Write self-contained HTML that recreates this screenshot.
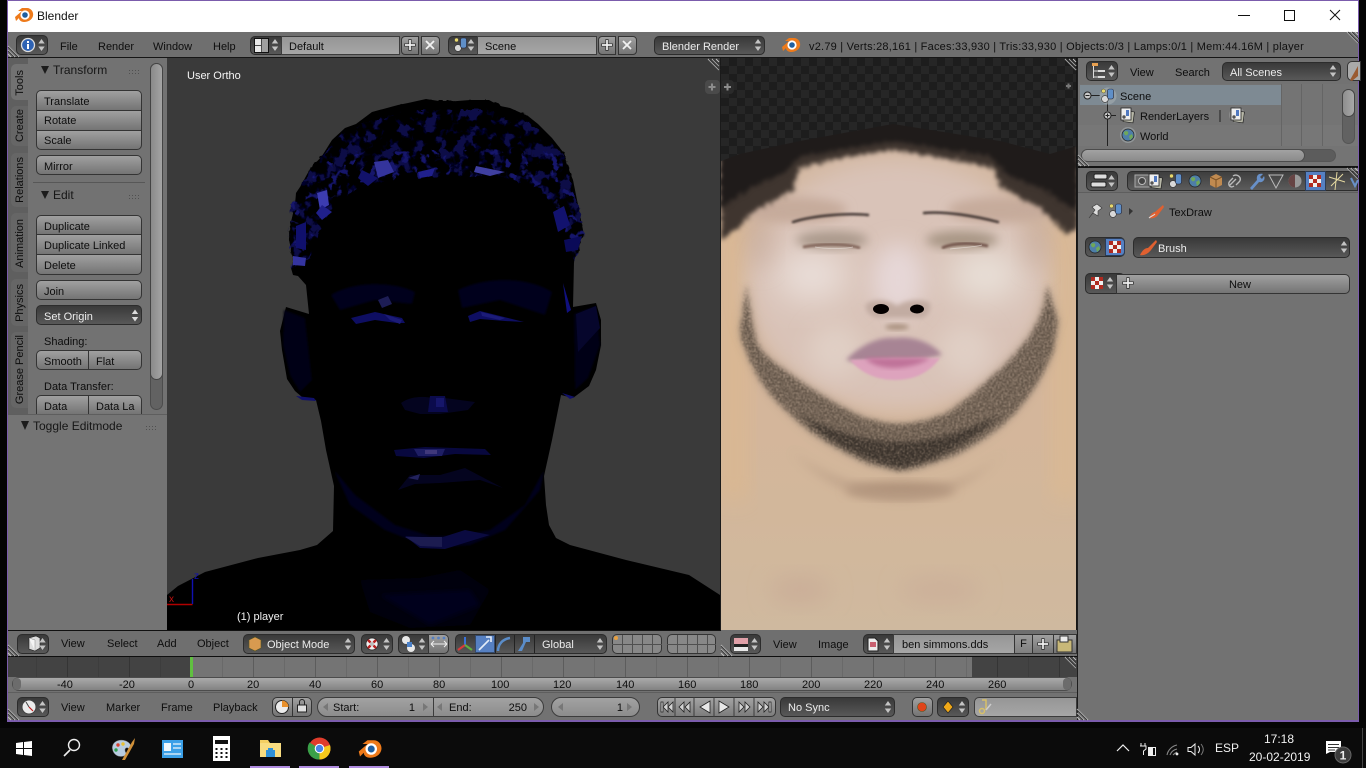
<!DOCTYPE html>
<html><head><meta charset="utf-8"><title>Blender</title>
<style>
html,body{margin:0;padding:0;width:1366px;height:768px;overflow:hidden;background:#040404}
*{box-sizing:border-box}
body{font:11px/14px "Liberation Sans",sans-serif;color:#0d0d0d;position:relative}
.a{position:absolute}
.t{position:absolute;white-space:nowrap;line-height:14px;margin-top:1px}
.p{position:absolute;background:#727272}
.d{position:absolute;background:linear-gradient(#393939,#585858);border:1px solid #2c2c2c;border-radius:5px;color:#ececec;white-space:nowrap}
.l{position:absolute;background:linear-gradient(#a0a0a0,#747474);border:1px solid #343434;border-radius:5px;white-space:nowrap;padding-left:7px}
.f{position:absolute;background:linear-gradient(#969696,#a6a6a6);border:1px solid #3c3c3c;white-space:nowrap}
.tab{position:absolute;left:11px;width:17px;background:#666;border-radius:5px 0 0 5px}
.tab span{position:absolute;left:2px;bottom:4px;writing-mode:vertical-rl;transform:rotate(180deg);line-height:14px;white-space:nowrap}
</style></head><body>
<!-- window frame -->
<div class="a" style="left:7px;top:0;width:1352px;height:722px;background:#7b5cac"></div>
<div class="a" style="left:8px;top:1px;width:1350px;height:31px;background:#fff"></div>
<div class="t" style="left:37px;top:8px;font-size:12px;color:#111">Blender</div>
<div class="a" style="left:8px;top:32px;width:1350px;height:688px;background:#161616"></div>

<!-- top header -->
<div class="p" style="left:8px;top:32px;width:1350px;height:25px;background:#6f6f6f"></div>
<div class="d" style="left:16px;top:35px;width:32px;height:20px"></div>
<div class="t" style="left:60px;top:39px">File</div>
<div class="t" style="left:98px;top:39px">Render</div>
<div class="t" style="left:153px;top:39px">Window</div>
<div class="t" style="left:213px;top:39px">Help</div>
<div class="d" style="left:250px;top:36px;width:34px;height:19px;border-radius:5px 0 0 5px"></div>
<div class="f" style="left:281px;top:36px;width:119px;height:19px;padding-left:7px;line-height:20px">Default</div>
<div class="l" style="left:401px;top:36px;width:18px;height:19px;border-radius:4px 0 0 4px"></div>
<div class="l" style="left:421px;top:36px;width:19px;height:19px;border-radius:0 4px 4px 0"></div>
<div class="d" style="left:448px;top:36px;width:32px;height:19px;border-radius:5px 0 0 5px"></div>
<div class="f" style="left:477px;top:36px;width:120px;height:19px;padding-left:7px;line-height:20px">Scene</div>
<div class="l" style="left:598px;top:36px;width:18px;height:19px;border-radius:4px 0 0 4px"></div>
<div class="l" style="left:618px;top:36px;width:19px;height:19px;border-radius:0 4px 4px 0"></div>
<div class="d" style="left:654px;top:36px;width:111px;height:19px;padding-left:7px;line-height:20px">Blender Render</div>
<div class="t" style="left:809px;top:39px;color:#101010;letter-spacing:.22px">v2.79 | Verts:28,161 | Faces:33,930 | Tris:33,930 | Objects:0/3 | Lamps:0/1 | Mem:44.16M | player</div>

<!-- tool shelf -->
<div class="p" style="left:8px;top:58px;width:159px;height:572px"></div>
<div class="a" style="left:8px;top:58px;width:20px;height:357px;background:#5f5f5f"></div>
<div class="tab" style="top:64px;height:36px;background:#727272"><span>Tools</span></div>
<div class="tab" style="top:106px;height:40px"><span>Create</span></div>
<div class="tab" style="top:153px;height:54px"><span>Relations</span></div>
<div class="tab" style="top:213px;height:59px"><span>Animation</span></div>
<div class="tab" style="top:279px;height:47px"><span>Physics</span></div>
<div class="tab" style="top:332px;height:76px"><span>Grease Pencil</span></div>
<div class="a" style="left:150px;top:63px;width:13px;height:347px;border-radius:7px;background:#626262;border:1px solid #4c4c4c"></div>
<div class="a" style="left:150px;top:63px;width:13px;height:317px;border-radius:7px;background:linear-gradient(90deg,#8a8a8a,#a4a4a4);border:1px solid #444"></div>
<div class="t" style="left:53px;top:62px;font-size:12px;color:#161616">Transform</div>
<div class="l" style="left:36px;top:90px;width:106px;height:21px;border-radius:5px 5px 0 0;line-height:22px">Translate</div>
<div class="l" style="left:36px;top:110px;width:106px;height:21px;border-radius:0;line-height:20px">Rotate</div>
<div class="l" style="left:36px;top:130px;width:106px;height:20px;border-radius:0 0 5px 5px;line-height:20px">Scale</div>
<div class="l" style="left:36px;top:155px;width:106px;height:20px;line-height:22px">Mirror</div>
<div class="a" style="left:33px;top:182px;width:112px;height:1px;background:#575757"></div>
<div class="t" style="left:53px;top:187px;font-size:12px;color:#161616">Edit</div>
<div class="l" style="left:36px;top:215px;width:106px;height:20px;border-radius:5px 5px 0 0;line-height:22px">Duplicate</div>
<div class="l" style="left:36px;top:234px;width:106px;height:21px;border-radius:0;line-height:22px">Duplicate Linked</div>
<div class="l" style="left:36px;top:254px;width:106px;height:21px;border-radius:0 0 5px 5px;line-height:22px">Delete</div>
<div class="l" style="left:36px;top:280px;width:106px;height:20px;line-height:22px">Join</div>
<div class="d" style="left:36px;top:305px;width:106px;height:20px;padding-left:7px;line-height:22px">Set Origin</div>
<div class="t" style="left:44px;top:334px">Shading:</div>
<div class="l" style="left:36px;top:350px;width:53px;height:20px;border-radius:5px 0 0 5px;line-height:22px">Smooth</div>
<div class="l" style="left:88px;top:350px;width:54px;height:20px;border-radius:0 5px 5px 0;line-height:22px">Flat</div>
<div class="t" style="left:44px;top:379px">Data Transfer:</div>
<div class="l" style="left:36px;top:395px;width:53px;height:19px;border-radius:5px 0 0 0;line-height:22px;border-bottom:0;overflow:hidden">Data</div>
<div class="l" style="left:88px;top:395px;width:54px;height:19px;border-radius:0 5px 0 0;line-height:22px;border-bottom:0;overflow:hidden">Data La</div>
<div class="a" style="left:8px;top:414px;width:159px;height:216px;background:#747474;border-top:1px solid #5e5e5e"></div>
<div class="t" style="left:33px;top:418px;font-size:12px;color:#161616">Toggle Editmode</div>

<!-- 3D viewport -->
<div class="a" style="left:167px;top:58px;width:553px;height:572px;background:#3a3a3a"></div>
<svg class="a" style="left:0;top:0" width="1366" height="768" viewBox="0 0 1366 768">
<defs>
<clipPath id="vp"><rect x="167" y="58" width="553" height="572"/></clipPath>
<clipPath id="tx"><rect x="721" y="58" width="355" height="572"/></clipPath>
<clipPath id="hb"><path d="M291 270 287 235 291 205 310 170 345 130 400 112 430 110 490 110 528 122 563 155 578 205 586 240 574 262 568 240 560 212 540 188 500 176 450 176 400 178 360 186 333 205 320 232 310 258Z"/></clipPath>
<filter id="b1" x="-30%" y="-30%" width="160%" height="160%"><feGaussianBlur stdDeviation="1"/></filter>
<filter id="b2" x="-30%" y="-30%" width="160%" height="160%"><feGaussianBlur stdDeviation="2.5"/></filter>
<filter id="b5" x="-30%" y="-30%" width="160%" height="160%"><feGaussianBlur stdDeviation="5"/></filter>
<filter id="b10" x="-40%" y="-40%" width="180%" height="180%"><feGaussianBlur stdDeviation="11"/></filter>
<filter id="b20" x="-60%" y="-60%" width="220%" height="220%"><feGaussianBlur stdDeviation="18"/></filter>
<filter id="jag" x="-5%" y="-5%" width="110%" height="110%"><feTurbulence type="fractalNoise" baseFrequency=".18" numOctaves="2" seed="4" result="n"/><feDisplacementMap in="SourceGraphic" in2="n" scale="6" xChannelSelector="R" yChannelSelector="G"/></filter>
<filter id="mot" x="0" y="0" width="100%" height="100%" color-interpolation-filters="sRGB"><feTurbulence type="fractalNoise" baseFrequency=".075" numOctaves="3" seed="9"/><feColorMatrix values="0 0 0 0 .035 0 0 0 0 .035 0 0 0 0 .28 8 0 0 0 -4.05"/></filter>
<filter id="mot2" x="0" y="0" width="100%" height="100%" color-interpolation-filters="sRGB"><feTurbulence type="fractalNoise" baseFrequency=".1" numOctaves="2" seed="21"/><feColorMatrix values="0 0 0 0 .08 0 0 0 0 .08 0 0 0 0 .42 12 0 0 0 -7.3"/></filter>
<filter id="bd" x="-10%" y="-10%" width="120%" height="120%" color-interpolation-filters="sRGB"><feTurbulence type="fractalNoise" baseFrequency=".55" numOctaves="2" seed="3" result="n"/><feDisplacementMap in="SourceGraphic" in2="n" scale="9" xChannelSelector="R" yChannelSelector="G"/><feGaussianBlur stdDeviation="2.2" result="s"/><feColorMatrix in="n" values="0 0 0 0 0 0 0 0 0 0 0 0 0 0 0 1.8 0 0 0 -.2" result="m"/><feGaussianBlur in="m" stdDeviation=".5" result="m2"/><feComposite in="s" in2="m2" operator="in"/></filter>
<filter id="hr" x="-5%" y="-5%" width="110%" height="110%" color-interpolation-filters="sRGB"><feTurbulence type="fractalNoise" baseFrequency=".3" numOctaves="3" seed="7" result="n"/><feDisplacementMap in="SourceGraphic" in2="n" scale="10" xChannelSelector="R" yChannelSelector="G"/><feGaussianBlur stdDeviation="2.2"/></filter>
<pattern id="chk" width="16" height="16" patternUnits="userSpaceOnUse" x="721" y="58"><rect width="16" height="16" fill="#1d1d1d"/><rect width="8" height="8" fill="#262626"/><rect x="8" y="8" width="8" height="8" fill="#262626"/></pattern>
<linearGradient id="skin" x1="0" y1="0" x2="0" y2="1"><stop offset="0" stop-color="#d2b9a5"/><stop offset=".55" stop-color="#d5b69b"/><stop offset=".8" stop-color="#d2b79b"/><stop offset="1" stop-color="#cfb99f"/></linearGradient>
<g id="ud"><path d="M0-6 3.2-1.5H-3.2ZM0 6 3.2 1.5H-3.2Z" fill="#c4c4c4"/></g>
<g id="ud2"><path d="M0-6 3.2-1.5H-3.2ZM0 6 3.2 1.5H-3.2Z" fill="#dcdcdc"/></g>
<g id="h"><path d="M0 0 11 11M4 0 11 7M8 0 11 3" stroke="#c0c0c0" stroke-width="1" fill="none"/><path d="M1 0 12 11M5 0 12 7" stroke="#3c3c3c" stroke-width="1" fill="none"/></g>
<g id="h2"><path d="M0 0 11 11M0 4 7 11M0 8 3 11" stroke="#c0c0c0" stroke-width="1" fill="none"/><path d="M0 1 10 11M0 5 6 11" stroke="#3c3c3c" stroke-width="1" fill="none"/></g>
<g id="blend"><path d="M-9 2-2-4-6-4-2-7H3C7-7 10-3 9 1 8 5 4 7 0 7-3 7-5 5-5 3L-8 6Z" fill="#ee7a1a"/><circle cx="1" cy="0" r="4.6" fill="#fff"/><circle cx="1" cy="0" r="2.8" fill="#1f5fa0"/></g>
<g id="plus"><path d="M-5 0H5M0-5V5" stroke="#f2f2f2" stroke-width="2"/><path d="M-5.5-1.2H-1.2V-5.5H1.2V-1.2H5.5V1.2H1.2V5.5H-1.2V1.2H-5.5Z" fill="none" stroke="#2a2a2a" stroke-width=".7"/></g>
<g id="x"><path d="M-4-4 4 4M4-4-4 4" stroke="#f2f2f2" stroke-width="1.800"/></g>
<g id="chkic"><rect x="-6" y="-6" width="12" height="12" fill="#f0f0f0"/><path d="M-6-6h4v4h-4zM2-6h4v4h-4zM-2-2h4v4h-4zM-6 2h4v4h-4zM2 2h4v4h-4z" fill="#b02a20"/></g>
<g id="sc"><circle cx="-3" cy="3" r="3.4" fill="#d8d8d8" stroke="#333" stroke-width=".6"/><rect x="-.5" y="-7" width="6" height="10" rx="2" fill="#5f8fc8" stroke="#223" stroke-width=".6"/><circle cx="-4.5" cy="-5" r="2" fill="#e8d86c" stroke="#333" stroke-width=".4"/></g>
<g id="globe"><circle r="6" fill="#4e7ea8" stroke="#222" stroke-width=".7"/><path d="M-4-3C-1-5 1-3 0-1-1 1-4 1-4-3ZM1 1 4-1 5 2 2 5Z" fill="#70a858"/></g>
<g id="rl"><rect x="-3" y="-4" width="10" height="11" fill="#b8b8a8" stroke="#222" stroke-width=".7" transform="rotate(8)"/><rect x="-6" y="-7" width="10" height="12" fill="#eee" stroke="#222" stroke-width=".8"/><rect x="-1" y="-5" width="3" height="6" fill="#5078c0"/><circle cx="-3" cy="2" r="1.7" fill="#555"/></g>
<g id="grip" fill="#505050"><path d="M0 0h1v1H0zM3 0h1v1H3zM6 0h1v1H6zM9 0h1v1H9zM0 3h1v1H0zM3 3h1v1H3zM6 3h1v1H6zM9 3h1v1H9z"/></g>
</defs>

<!-- 3D head -->
<g clip-path="url(#vp)">
<path fill="#000" d="M167 595 178 586 205 572 258 558 300 550 317 545 333 531 334 486 326 450 321 421 316 400 302 397 295 391 287 379 282 350 280 331 286 307 309 314 306 285 298 276 293 275 291 268 294 262 289 240 291 222 295 205 296 193 302 184 305 178 310 169 322 156 332 140 345 128 356 124 372 112 398 105 408 103 426 99 445 102 470 100 489 100 500 106 510 108 528 116 538 124 552 138 563 152 567 165 573 180 578 205 584 235 575 248 574 262 573 307 596 303 601 320 601 345 596 370 589 386 573 398 561 395 552 440 544 476 546 505 549 525 556 538 570 545 626 560 689 575 720 595 720 630 167 630Z"/>
<path fill="#000" filter="url(#jag)" d="M293 268 289 235 295 200 308 172 344 130 398 106 430 101 490 101 528 116 563 152 574 185 583 236 574 262 500 290 360 290Z"/>
<!-- hair mottling -->
<g filter="url(#jag)"><g clip-path="url(#hb)">
<rect x="280" y="95" width="310" height="180" filter="url(#mot)"/>
<rect x="280" y="150" width="310" height="120" filter="url(#mot2)"/>
</g></g>
<g fill="#0b0b5c">
<path d="M374 162 388 160 394 172 378 178Z" fill="#34349c"/><path d="M362 170 378 178 368 186 358 178Z" fill="#12126a"/>
<path d="M418 172 435 168 432 176 420 178Z" fill="#20208c"/>
<path d="M476 166 505 172 490 176 474 172Z" fill="#3f3fa0"/>
<path d="M553 212 564 206 570 225 558 232Z" fill="#12126e"/><path d="M564 240 582 236 578 250 566 252Z" fill="#0a0a58"/>
<path d="M317 193 327 190 329 205 320 210Z" fill="#3c3cb0"/><path d="M322 205 332 212 322 220 316 213Z" fill="#20208a"/>
<path d="M293 256 306 258 305 266 293 265Z" fill="#3434a0"/><path d="M296 226 306 222 306 250 296 248Z" fill="#10106c"/>
</g>
<!-- temples, ears, eyes -->
<path d="M563 283 571 310 567 313Z" fill="#10107e"/>
<path d="M284 310 305 318 312 380 300 392 290 375 283 345Z" fill="#030316" filter="url(#b1)"/><path d="M574 314 596 306 600 345 588 378 575 390Z" fill="#030318" filter="url(#b1)"/><path d="M576 314 596 306 600 328 578 352Z" fill="#06062c"/>
<path d="M296 396 314 398 316 401 302 400Z" fill="#10106a"/><path d="M562 393 575 397 570 399Z" fill="#10106a"/>
<path d="M331 295C355 280 395 282 415 292L412 304 375 300 340 310Z" fill="#03031a" filter="url(#b1)"/><path d="M458 290C490 275 530 278 552 292L545 315 500 300 462 308Z" fill="#03031a" filter="url(#b1)"/>
<path d="M378 300 388 296 392 304 382 308Z" fill="#1d1d55"/>
<path d="M351 318 375 312 402 318 405 323 397 323 375 320 356 324Z" fill="#0e0e62"/><path d="M384 314 402 320 400 324 390 320Z" fill="#1c1c78"/>
<path d="M468 316 480 311 524 322 505 321 480 319 470 322Z" fill="#0e0e62"/><path d="M481 312 505 318 500 320 482 316Z" fill="#1c1c78"/>
<path d="M401 403C410 396 425 396 432 398H445L475 402 468 410 440 414 420 414 405 410Z" fill="#04041f"/><path d="M430 396H445L448 412H428Z" fill="#0b0b4c"/><path d="M436 398H444V407H436Z" fill="#16166a"/>
<path d="M394 450 425 447 485 449 491 455 455 454 424 458 396 456Z" fill="#08083e"/><path d="M414 449H445L442 456 418 456Z" fill="#1e1e64"/><path d="M425 450H437V454H425Z" fill="#40387a"/>
<path d="M398 490 410 475 440 475 465 468 503 488 480 480 440 483 415 484Z" fill="#04041f"/><path d="M408 478 420 474 418 480Z" fill="#22225c"/>
<path d="M334 470 350 505 385 530 430 548 470 545 505 530 540 490 544 470 525 505 490 530 460 536 430 536 395 525 355 495Z" fill="#03031a" filter="url(#b1)"/>
<path d="M405 536 440 538 465 530 490 535 445 549 420 548Z" fill="#0a0a40"/><path d="M405 537H442V547L420 546Z" fill="#1c1c50"/>
<path d="M360 580 420 578 460 570 490 590 470 625 410 628 370 612Z" fill="#020210" filter="url(#b2)"/><path d="M380 595 470 590 480 605 430 625Z" fill="#03031c" filter="url(#b2)"/>
</g>
<text x="187" y="79" font-family="Liberation Sans" font-size="11" fill="#f4f4f4">User Ortho</text>
<text x="237" y="620" font-family="Liberation Sans" font-size="11" fill="#f0f0f0">(1) player</text>
<path d="M167 604.5H192.5" stroke="#b00000" stroke-width="1.4"/><path d="M192.500 604V579" stroke="#1010b0" stroke-width="1.4"/>
<text x="169" y="602" font-family="Liberation Sans" font-size="10" fill="#c01010">x</text><text x="194" y="579" font-family="Liberation Sans" font-size="10" fill="#1010b0">z</text>

<!-- Texture -->
<g clip-path="url(#tx)">
<rect x="721" y="58" width="355" height="572" fill="url(#skin)"/>
<rect x="721" y="220" width="26" height="280" fill="#dcb88f" filter="url(#b10)" opacity=".8"/><rect x="1052" y="220" width="26" height="280" fill="#dbb992" filter="url(#b10)" opacity=".8"/>
<ellipse cx="897" cy="285" rx="150" ry="125" fill="#d9c3b8" filter="url(#b10)"/>
<ellipse cx="812" cy="275" rx="36" ry="24" fill="#ece2de" filter="url(#b20)"/><ellipse cx="985" cy="275" rx="36" ry="24" fill="#ebe4dd" filter="url(#b20)"/>
<ellipse cx="898" cy="280" rx="26" ry="36" fill="#e6d7d7" filter="url(#b10)"/>
<ellipse cx="835" cy="350" rx="26" ry="26" fill="#e0cfc5" filter="url(#b10)"/><ellipse cx="965" cy="350" rx="26" ry="26" fill="#e0cfc5" filter="url(#b10)"/>
<ellipse cx="795" cy="210" rx="52" ry="13" fill="#c6ab9b" filter="url(#b5)"/><ellipse cx="1000" cy="210" rx="52" ry="13" fill="#c6ab9b" filter="url(#b5)"/>
<ellipse cx="760" cy="240" rx="14" ry="30" fill="#c6ab9b" filter="url(#b10)" opacity=".55"/><ellipse cx="1036" cy="240" rx="14" ry="30" fill="#c6ab9b" filter="url(#b10)" opacity=".55"/>
<!-- beard -->
<path d="M740 333C750 365 760 380 770 394 790 415 805 428 820 438 840 450 855 458 870 464L900 471C920 468 935 463 953 456 970 448 990 435 1003 424 1025 405 1042 378 1053 351L1058 322 1047 285C1046 305 1040 320 1030 336 1018 352 1005 366 993 376 978 390 962 404 947 413 930 420 915 424 897 424 885 424 870 420 860 416 845 409 832 402 820 394 805 385 795 378 783 369 772 362 763 354 757 344 752 325 749 305 747 285Z" fill="#a39080" filter="url(#b5)" opacity=".8"/>
<path d="M740 333C750 365 760 380 770 394 790 415 805 428 820 438 840 450 855 458 870 464L900 471C920 468 935 463 953 456 970 448 990 435 1003 424 1025 405 1042 378 1053 351L1058 322 1047 285C1046 305 1040 320 1030 336 1018 352 1005 366 993 376 978 390 962 404 947 413 930 420 915 424 897 424 885 424 870 420 860 416 845 409 832 402 820 394 805 385 795 378 783 369 772 362 763 354 757 344 752 325 749 305 747 285Z" fill="#5c4f43" filter="url(#bd)"/>
<path d="M800 415C830 445 870 462 900 468 935 462 975 440 1000 415 970 430 935 442 900 442 865 442 830 430 800 415Z" fill="#352e28" filter="url(#bd)"/>
<ellipse cx="900" cy="490" rx="55" ry="8" fill="#ad9078" filter="url(#b5)"/>
<path d="M790 450C830 490 870 500 900 500 940 500 975 485 1010 445 980 480 940 490 900 490 860 490 820 475 790 450Z" fill="#b69a82" filter="url(#b5)" opacity=".8"/>
<ellipse cx="800" cy="590" rx="30" ry="14" fill="#caae98" filter="url(#b10)"/><ellipse cx="940" cy="590" rx="40" ry="14" fill="#ccb09a" filter="url(#b10)"/>
<!-- hair -->
<path d="M721 240 743 224 752 212 793 190 799 168 840 158 893 150 945 158 993 168 1001 188 1040 208 1066 234 1077 230 1077 58 721 58Z" fill="#3f352f" filter="url(#hr)"/>
<path d="M721 208 750 188 785 172 800 156 893 141 990 156 1010 176 1045 190 1077 212 1077 58 721 58Z" fill="#1f1b1a" filter="url(#hr)"/>
<path d="M721 58H1077V146L1050 154 1000 141 893 124 800 141 740 154 721 161Z" fill="url(#chk)"/>
<!-- brows & eyes -->
<path d="M793 222C815 215 850 213 868 215" stroke="#3c322f" stroke-width="2.4" fill="none" filter="url(#b1)" stroke-linecap="round"/>
<path d="M924 213C945 211 975 216 998 222" stroke="#3c322f" stroke-width="2.4" fill="none" filter="url(#b1)" stroke-linecap="round"/>
<ellipse cx="832" cy="240" rx="36" ry="9" fill="#ab9a8c" filter="url(#b5)"/><ellipse cx="962" cy="240" rx="36" ry="9" fill="#a89685" filter="url(#b5)"/>
<path d="M803 247C820 244 845 243 860 248" stroke="#7f6257" stroke-width="2.8" fill="none" filter="url(#b1)"/><path d="M942 248C955 242 975 243 988 246" stroke="#6e5046" stroke-width="2.800" fill="none" filter="url(#b1)"/>
<path d="M815 247C825 249 845 249 853 247" stroke="#e8e0da" stroke-width=".8" fill="none" opacity=".7"/><path d="M950 249C958 248 975 247 982 245" stroke="#e8e0da" stroke-width=".8" fill="none" opacity=".7"/>
<!-- nose -->
<path d="M866 304C875 298 890 300 897 306 905 300 922 298 930 303 932 312 925 320 917 318H880C872 318 864 312 866 304Z" fill="#c2aca2" filter="url(#b2)"/>
<ellipse cx="881" cy="309" rx="8" ry="5" fill="#040000"/><ellipse cx="917" cy="309" rx="7" ry="4.500" fill="#040000"/>
<ellipse cx="897" cy="327" rx="12" ry="3" fill="#a9917f" filter="url(#b2)"/>
<!-- lips -->
<path d="M846 360C860 345 880 336 895 338 915 335 935 345 942 355 930 358 910 362 895 360 880 362 860 364 846 360Z" fill="#a78494" filter="url(#b2)"/>
<path d="M850 360C875 358 915 358 940 358 930 372 915 380 895 380 875 380 860 372 850 360Z" fill="#dda3bd" filter="url(#b1)"/>
<path d="M865 358H930C920 366 900 368 895 368 880 368 870 364 865 358Z" fill="#bf7299" filter="url(#b2)"/>
<path d="M1066 86h5M1068.500 83.500v5" stroke="#777" stroke-width="2"/>
</g>
<rect x="720" y="58" width="1" height="572" fill="#1a1a1a"/>

<!-- viewport small plus & hatch -->
<rect x="705" y="80" width="15" height="14" rx="4" fill="#4a4a4a"/><path d="M708.500 87h7M712 83.500v7" stroke="#8c8c8c" stroke-width="2"/>
<rect x="721" y="80" width="13" height="14" rx="4" fill="#2a2a2a"/><path d="M724 87h7M727.500 83.500v7" stroke="#8c8c8c" stroke-width="2"/>
<use href="#h" x="708" y="59"/><use href="#h" x="1065" y="59"/>

</svg>

<!-- right outliner & props -->
<div class="p" style="left:1077px;top:58px;width:281px;height:110px"></div>
<div class="a" style="left:1077px;top:58px;width:1px;height:662px;background:#1c1c1c"></div>
<div class="d" style="left:1086px;top:61px;width:32px;height:20px"></div>
<div class="t" style="left:1130px;top:65px">View</div><div class="t" style="left:1175px;top:65px">Search</div>
<div class="d" style="left:1222px;top:62px;width:119px;height:19px;padding-left:7px;line-height:20px">All Scenes</div>
<div class="l" style="left:1347px;top:61px;width:14px;height:20px;border-radius:5px 0 0 5px;background:#aaa"></div>
<div class="a" style="left:1078px;top:84px;width:280px;height:62px;background:#747474"></div>
<div class="a" style="left:1080px;top:85px;width:201px;height:20px;background:#7e8a93"></div>
<div class="a" style="left:1078px;top:125px;width:280px;height:21px;background:#777"></div>
<div class="a" style="left:1281px;top:84px;width:1px;height:62px;background:#656565"></div><div class="a" style="left:1301px;top:84px;width:1px;height:62px;background:#656565"></div><div class="a" style="left:1322px;top:84px;width:1px;height:62px;background:#656565"></div>
<div class="t" style="left:1120px;top:89px">Scene</div><div class="t" style="left:1140px;top:109px">RenderLayers</div>
<div class="a" style="left:1219px;top:110px;width:2px;height:12px;background:#4a4a4a"></div>
<div class="t" style="left:1140px;top:129px">World</div>
<div class="a" style="left:1342px;top:89px;width:13px;height:55px;border-radius:7px;background:#626262;border:1px solid #555"></div>
<div class="a" style="left:1342px;top:89px;width:13px;height:28px;border-radius:7px;background:linear-gradient(90deg,#8e8e8e,#a8a8a8);border:1px solid #444"></div>
<div class="a" style="left:1078px;top:146px;width:280px;height:20px;background:#747474"></div>
<div class="a" style="left:1081px;top:149px;width:255px;height:13px;border-radius:7px;background:#5c5c5c;border:1px solid #565656"></div>
<div class="a" style="left:1081px;top:149px;width:224px;height:13px;border-radius:7px;background:linear-gradient(#a2a2a2,#8a8a8a);border:1px solid #4c4c4c"></div>
<div class="a" style="left:1078px;top:166px;width:280px;height:2px;background:#141414"></div>
<div class="p" style="left:1078px;top:168px;width:280px;height:24px;background:#6f6f6f"></div>
<div class="d" style="left:1086px;top:171px;width:32px;height:20px"></div>
<div class="d" style="left:1127px;top:171px;width:231px;height:20px;border-radius:5px 0 0 5px;background:linear-gradient(#3e3e3e,#5c5c5c)"></div>
<div class="a" style="left:1305px;top:171px;width:21px;height:20px;background:#5680c2;border:1px solid #2c3c55"></div>
<div class="p" style="left:1078px;top:192px;width:280px;height:528px;border-top:1px solid #5e5e5e"></div>
<div class="t" style="left:1169px;top:205px">TexDraw</div>
<div class="d" style="left:1085px;top:237px;width:40px;height:20px;background:linear-gradient(#3e3e3e,#585858)"></div>
<div class="a" style="left:1105px;top:238px;width:20px;height:18px;background:#5680c2;border-radius:0 4px 4px 0;border:1px solid #2c3c55"></div>
<div class="d" style="left:1133px;top:237px;width:217px;height:21px;padding-left:24px;line-height:22px">Brush</div>
<div class="d" style="left:1085px;top:273px;width:40px;height:21px"></div>
<div class="l" style="left:1116px;top:274px;width:234px;height:20px;border-radius:0 5px 5px 0;padding:0 0 0 14px;text-align:center;line-height:20px">New</div>

<!-- 3D header -->
<div class="a" style="left:8px;top:630px;width:713px;height:1px;background:#111"></div>
<div class="p" style="left:8px;top:631px;width:713px;height:25px;background:#6f6f6f"></div>
<div class="d" style="left:17px;top:634px;width:32px;height:20px"></div>
<div class="t" style="left:61px;top:636px">View</div><div class="t" style="left:107px;top:636px">Select</div><div class="t" style="left:157px;top:636px">Add</div><div class="t" style="left:197px;top:636px">Object</div>
<div class="d" style="left:243px;top:634px;width:112px;height:20px;padding-left:23px;line-height:20px">Object Mode</div>
<div class="d" style="left:361px;top:634px;width:32px;height:20px"></div>
<div class="d" style="left:398px;top:634px;width:31px;height:20px;border-radius:5px 0 0 5px"></div>
<div class="l" style="left:428px;top:634px;width:21px;height:20px;border-radius:0 5px 5px 0;padding:0"></div>
<div class="d" style="left:455px;top:634px;width:152px;height:20px;padding-left:86px;line-height:20px">Global</div>
<div class="a" style="left:475px;top:635px;width:20px;height:18px;background:#5680c2;border:1px solid #34496a"></div>
<div class="a" style="left:495px;top:635px;width:1px;height:18px;background:#222"></div><div class="a" style="left:514px;top:635px;width:1px;height:18px;background:#222"></div><div class="a" style="left:534px;top:635px;width:1px;height:18px;background:#222"></div>
<div class="l" style="left:612px;top:634px;width:50px;height:20px;padding:0;background:repeating-linear-gradient(90deg,#888 0 9px,#505050 9px 10px)"></div>
<div class="a" style="left:612px;top:644px;width:50px;height:1px;background:#505050"></div>
<div class="l" style="left:667px;top:634px;width:49px;height:20px;padding:0;background:repeating-linear-gradient(90deg,#888 0 9px,#505050 9px 10px)"></div>
<div class="a" style="left:667px;top:644px;width:49px;height:1px;background:#505050"></div>

<!-- Image header -->
<div class="p" style="left:721px;top:630px;width:356px;height:26px;background:#6f6f6f"></div>
<div class="d" style="left:730px;top:634px;width:31px;height:20px"></div>
<div class="t" style="left:773px;top:637px">View</div><div class="t" style="left:818px;top:637px">Image</div>
<div class="d" style="left:863px;top:634px;width:32px;height:20px;border-radius:5px 0 0 5px"></div>
<div class="f" style="left:893px;top:634px;width:122px;height:20px;padding-left:8px;line-height:20px;font-size:11px">ben simmons.dds</div>
<div class="l" style="left:1014px;top:634px;width:19px;height:20px;border-radius:0;padding:0;text-align:center;line-height:19px;background:linear-gradient(#9a9a9a,#808080)">F</div>
<div class="l" style="left:1032px;top:634px;width:22px;height:20px;border-radius:0;padding:0"></div>
<div class="l" style="left:1053px;top:634px;width:24px;height:20px;border-radius:0;padding:0"></div>

<!-- timeline -->
<div class="a" style="left:8px;top:656px;width:1069px;height:1px;background:#0e0e0e"></div>
<div class="a" style="left:8px;top:657px;width:1069px;height:20px;background-color:#747474;background-image:linear-gradient(90deg,#5c5c5c 1px,transparent 1px),linear-gradient(90deg,#696969 1px,transparent 1px);background-size:62px 100%,31px 100%;background-position:59px 0,28px 0"></div>
<div class="a" style="left:8px;top:657px;width:183px;height:20px;background:rgba(0,0,0,.42)"></div>
<div class="a" style="left:972px;top:657px;width:105px;height:20px;background:rgba(0,0,0,.42)"></div>
<div class="a" style="left:190px;top:657px;width:3px;height:20px;background:#60c040"></div>
<div class="a" style="left:8px;top:677px;width:1069px;height:43px;background:#727272"></div>
<div class="a" style="left:12px;top:677px;width:1060px;height:14px;border-radius:7px;background:linear-gradient(#aaa,#828282);border:1px solid #4c4c4c"></div>
<div class="a" style="left:13px;top:678px;width:8px;height:12px;border-radius:6px;background:#6c6c6c"></div><div class="a" style="left:1063px;top:678px;width:8px;height:12px;border-radius:6px;background:#6c6c6c"></div>
<div class="t" style="left:57px;top:677px">-40</div><div class="t" style="left:119px;top:677px">-20</div><div class="t" style="left:188px;top:677px">0</div><div class="t" style="left:247px;top:677px">20</div><div class="t" style="left:309px;top:677px">40</div><div class="t" style="left:371px;top:677px">60</div><div class="t" style="left:433px;top:677px">80</div><div class="t" style="left:491px;top:677px">100</div><div class="t" style="left:553px;top:677px">120</div><div class="t" style="left:616px;top:677px">140</div><div class="t" style="left:678px;top:677px">160</div><div class="t" style="left:740px;top:677px">180</div><div class="t" style="left:802px;top:677px">200</div><div class="t" style="left:864px;top:677px">220</div><div class="t" style="left:926px;top:677px">240</div><div class="t" style="left:988px;top:677px">260</div>
<div class="a" style="left:8px;top:692px;width:1069px;height:1px;background:#5e5e5e"></div>
<div class="d" style="left:17px;top:697px;width:32px;height:20px"></div>
<div class="t" style="left:61px;top:700px">View</div><div class="t" style="left:106px;top:700px">Marker</div><div class="t" style="left:161px;top:700px">Frame</div><div class="t" style="left:213px;top:700px">Playback</div>
<div class="l" style="left:272px;top:697px;width:21px;height:20px;border-radius:5px 0 0 5px;padding:0"></div>
<div class="l" style="left:292px;top:697px;width:20px;height:20px;border-radius:0 5px 5px 0;padding:0"></div>
<div class="f" style="left:317px;top:697px;width:117px;height:20px;border-radius:10px 0 0 10px;padding-left:15px;line-height:21px;background:linear-gradient(#a2a2a2,#8c8c8c)">Start:<span class="a" style="right:18px">1</span></div>
<div class="f" style="left:433px;top:697px;width:111px;height:20px;border-radius:0 10px 10px 0;padding-left:15px;line-height:21px;background:linear-gradient(#a2a2a2,#8c8c8c)">End:<span class="a" style="right:16px">250</span></div>
<div class="f" style="left:551px;top:697px;width:89px;height:20px;border-radius:10px;line-height:21px;background:linear-gradient(#a2a2a2,#8c8c8c)"><span class="a" style="right:16px">1</span></div>
<div class="l" style="left:657px;top:697px;width:119px;height:20px;padding:0;background:linear-gradient(#a4a4a4,#7c7c7c)"></div>
<div class="d" style="left:780px;top:697px;width:115px;height:20px;padding-left:7px;line-height:21px">No Sync</div>
<div class="l" style="left:912px;top:697px;width:21px;height:20px;padding:0"></div>
<div class="d" style="left:937px;top:697px;width:32px;height:20px"></div>
<div class="f" style="left:974px;top:697px;width:103px;height:20px;border-radius:5px 0 0 5px"></div>

<!-- taskbar -->
<div class="a" style="left:0;top:722px;width:1366px;height:46px;background:#050505"></div>
<div class="a" style="left:0;top:728px;width:1366px;height:40px;background:#0b0b0b"></div>
<div class="a" style="left:250px;top:766px;width:40px;height:2px;background:#b08ce0"></div>
<div class="a" style="left:299px;top:766px;width:40px;height:2px;background:#b08ce0"></div>
<div class="a" style="left:349px;top:766px;width:40px;height:2px;background:#b08ce0"></div>
<div class="t" style="left:1215px;top:740px;font-size:12px;color:#f2f2f2">ESP</div>
<div class="t" style="left:1264px;top:731px;font-size:12px;color:#f2f2f2">17:18</div>
<div class="t" style="left:1249px;top:749px;font-size:12px;color:#f2f2f2">20-02-2019</div>

<!-- icon overlay -->
<svg class="a" style="left:0;top:0" width="1366" height="768" viewBox="0 0 1366 768">
<!-- title -->
<use href="#blend" x="24" y="15"/>
<path d="M1238 15.500H1250" stroke="#111"/><rect x="1284.500" y="10.500" width="10" height="10" fill="none" stroke="#111"/><path d="M1330 10 1340 20M1340 10 1330 20" stroke="#111"/>
<!-- hatch corners -->
<use href="#h2" x="8" y="46"/><use href="#h" x="1347" y="32"/><use href="#h2" x="1078" y="155"/><use href="#h" x="1347" y="168"/><use href="#h2" x="8" y="645"/><use href="#h2" x="721" y="645"/><use href="#h" x="1065" y="657"/><use href="#h2" x="8" y="709"/><use href="#h2" x="1077" y="709"/>
<!-- top header icons -->
<circle cx="28" cy="45" r="6.500" fill="#2f63b4" stroke="#ddd" stroke-width="1.300"/><rect x="27" y="44" width="2" height="5" fill="#fff"/><rect x="27" y="41" width="2" height="2" fill="#fff"/><use href="#ud" x="41.500" y="45"/>
<rect x="255" y="39" width="6" height="6" fill="#e8e8e8"/><rect x="255" y="46" width="6" height="6" fill="#e8e8e8"/><rect x="262" y="39" width="6" height="13" fill="#a0a0a0"/><rect x="254.500" y="38.500" width="14" height="14" fill="none" stroke="#111"/><use href="#ud" x="275" y="45"/>
<use href="#plus" x="410" y="45"/><use href="#x" x="430" y="45"/><use href="#sc" x="461" y="45"/><use href="#ud" x="471" y="45"/><use href="#plus" x="607" y="45"/><use href="#x" x="627" y="45"/><use href="#ud" x="758" y="45"/>
<use href="#blend" x="791" y="45"/>
<!-- shelf triangles/grips -->
<path d="M41 66H49L45 74Z M41 191H49L45 199Z" fill="#1c1c1c"/><path d="M21 421H29L25 430Z" fill="#1c1c1c"/>
<use href="#grip" x="129" y="70"/><use href="#grip" x="129" y="195"/><use href="#grip" x="146" y="426"/>
<use href="#ud2" x="135" y="315.500"/>
<!-- outliner -->
<g stroke="#222" fill="none"><circle cx="1087.500" cy="95.500" r="3.500" fill="#c8c8c8"/><path d="M1085.500 95.500h4"/><circle cx="1107.500" cy="115.500" r="3.500" fill="#c8c8c8"/><path d="M1105.500 115.500h4M1107.500 113.500v4"/><path d="M1091 95.500h9M1107.500 100v11M1107.500 119v27M1111 115.500h5"/></g>
<circle cx="1108" cy="96" r="8.500" fill="#a8b0b4" opacity=".55"/><use href="#sc" x="1108" y="96"/><use href="#rl" x="1127" y="115"/><circle cx="1237" cy="115" r="8" fill="#999" opacity=".6"/><use href="#rl" x="1237" y="115"/><circle cx="1128" cy="135" r="8" fill="#a8b0b4" opacity=".55"/><use href="#globe" x="1128" y="135"/>
<!-- outliner header -->
<rect x="1092" y="63" width="6" height="3" fill="#e8a050"/><path d="M1093.500 66V78M1093.500 71H1098M1093.500 77H1098" stroke="#ddd"/><rect x="1098" y="70" width="7" height="2" fill="#ddd"/><rect x="1098" y="76" width="7" height="2" fill="#ddd"/><use href="#ud" x="1111.500" y="71"/><use href="#ud" x="1333" y="71"/>
<path d="M1350 80 1358 66 1358 76 1352 81Z" fill="#9a5a30"/>
<!-- props header icons -->
<rect x="1094" y="174" width="13" height="5" rx="1.500" fill="#ddd" stroke="#222"/><rect x="1091" y="182" width="15" height="5" rx="1.500" fill="#ddd" stroke="#222"/><use href="#ud" x="1111.500" y="181"/>
<rect x="1135" y="175" width="14" height="12" fill="#666" stroke="#aaa"/><circle cx="1142" cy="181" r="3.500" fill="#444" stroke="#bbb"/><use href="#rl" x="1155" y="181"/><use href="#sc" x="1176" y="181"/><use href="#globe" x="1195" y="181"/>
<path d="M1216 174 1222 177V185L1216 188 1210 185V177Z" fill="#c08a50"/><path d="M1216 180V188M1210 177 1216 180 1222 177" stroke="#7a5024" fill="none"/>
<path d="M1229 186 1236 179M1234 186C1230 189 1227 184 1230 181L1233 178M1233 176C1237 173 1243 178 1239 182L1236 185" stroke="#bbb" stroke-width="1.400" fill="none"/>
<path d="M1250 188 1257 180C1256 175 1259 173 1263 174L1260 177 1262 179 1264 176C1266 180 1262 183 1259 182L1252 190Z" fill="#6890c8"/>
<path d="M1269 175 1276 188 1283 175Z" fill="none" stroke="#bbb"/><circle cx="1295" cy="181" r="6.500" fill="#999"/><path d="M1295 174.500A6.500 6.500 0 0 0 1295 187.500Z" fill="#644"/>
<use href="#chkic" x="1315" y="181"/><path d="M1337 172 1335 190M1329 177 1345 182M1331 186 1343 174" stroke="#e4d8a0"/><path d="M1351 178 1355 186 1358 180" stroke="#6890c8" stroke-width="2" fill="none"/>
<!-- texdraw rows -->
<path d="M1089 218 1095 210 1092 207 1097 204 1102 208 1098 211 1098 216 1093 213Z" fill="#ddd" stroke="#333" stroke-width=".6"/><use href="#sc" x="1116" y="211"/><path d="M1129 208 1133 211 1129 215Z" fill="#333"/>
<path d="M1149 218C1151 213 1154 212 1155 212L1163 205 1164 207 1158 215C1156 218 1152 219 1149 218Z" fill="#e06030"/><path d="M1149 218C1151 216 1153 216 1155 214" stroke="#ddd" fill="none"/>
<use href="#globe" x="1095" y="247"/><use href="#chkic" x="1115" y="247"/><path d="M1140 255C1143 249 1146 248 1148 248L1156 240 1157 242 1151 250C1148 254 1143 256 1140 255Z" fill="#e06030"/><use href="#ud" x="1344" y="247"/>
<use href="#chkic" x="1097" y="283"/><use href="#ud" x="1110" y="283"/><use href="#plus" x="1128" y="283"/>
<!-- 3d header icons -->
<path d="M29 638 36 636 40 638V648L35 651 29 649Z" fill="#ddd" stroke="#222" stroke-width=".6"/><path d="M29 638 35 640V651" fill="#f4f4f4" stroke="#888" stroke-width=".5"/><use href="#ud" x="42.500" y="644"/>
<path d="M255 637 261 640V648L255 651 249 648V640Z" fill="#d89a50" stroke="#552" stroke-width=".6"/><use href="#ud" x="348" y="644"/>
<circle cx="372" cy="644" r="6" fill="#f0f0f0" stroke="#222" stroke-width=".7"/><circle cx="372" cy="644" r="2" fill="#bbb"/><path d="M368 640 370.500 642.500M376 640 373.500 642.500M368 648 370.500 645.500M376 648 373.500 645.500" stroke="#b82020" stroke-width="2.500"/><use href="#ud" x="386.500" y="644"/>
<circle cx="406" cy="640" r="4" fill="#e8e8e8"/><circle cx="411" cy="648" r="4" fill="#e8e8e8"/><rect x="407" y="642" width="5" height="5" fill="#4a80c8"/><use href="#ud" x="422" y="644"/>
<path d="M431 644H447M431 644 434 641M431 644 434 647M447 644 444 641M447 644 444 647" stroke="#f0f0f0" fill="none"/><circle cx="433" cy="638" r="1.400" fill="#5680c2"/><circle cx="438.500" cy="638" r="1.400" fill="#5680c2"/><circle cx="444" cy="638" r="1.400" fill="#5680c2"/>
<path d="M465 645V637" stroke="#3a72d8" stroke-width="2"/><path d="M465 645 458 650" stroke="#d83a3a" stroke-width="2"/><path d="M465 645 472 650" stroke="#60b040" stroke-width="2"/>
<path d="M479 650 489 640M486 637H491V642" stroke="#e4ecf8" stroke-width="1.600" fill="none"/><path d="M498 651C498 644 503 639 510 638" stroke="#5a8cc8" stroke-width="2.500" fill="none"/>
<path d="M518 651 523 643V637H530V642H526L522 651Z" fill="#5a8cc8"/><use href="#ud" x="600" y="644"/>
<circle cx="616" cy="638" r="2" fill="#e8a040"/>
<!-- image header icons -->
<rect x="734" y="638" width="14" height="13" fill="#e0a0a8"/><rect x="734" y="644" width="14" height="3" fill="#222"/><rect x="734" y="647" width="14" height="4" fill="#e8e8e8"/><use href="#ud" x="754.500" y="644"/>
<path d="M868 638H875L878 641V651H868Z" fill="#ececec" stroke="#222"/><rect x="870" y="642" width="6" height="5" fill="#c86070"/><use href="#ud" x="887" y="644"/>
<use href="#plus" x="1043" y="644"/><path d="M1057 640H1063V638H1068V640H1072V652H1057Z" fill="#c8b878" stroke="#333"/><rect x="1060" y="636" width="8" height="6" fill="#ececec" stroke="#333"/>
<!-- timeline header -->
<circle cx="29" cy="707" r="7" fill="#ececec" stroke="#444"/><path d="M29 707 26 702" stroke="#444"/><path d="M29 707 33 711" stroke="#c02020" stroke-width="1.200"/><use href="#ud" x="42.500" y="707"/>
<circle cx="282" cy="707" r="6.500" fill="#ececec" stroke="#222"/><path d="M282 707V700.500A6.500 6.500 0 0 1 288.500 707Z" fill="#e8902c"/>
<rect x="297.500" y="705" width="9" height="7" fill="#e0e0e0" stroke="#222"/><path d="M299.500 705V702A2.500 2.500 0 0 1 304.500 702V705" fill="none" stroke="#222"/>
<path d="M323 707 328 703V711ZM437 707 442 703V711ZM558 707 563 703V711Z" fill="#777"/><path d="M428 707 423 703V711ZM539 707 534 703V711ZM632 707 627 703V711Z" fill="#777"/>
<path d="M675 697V717M694 697V717M714 697V717M734 697V717M754 697V717" stroke="#3c3c3c"/>
<g fill="#d4d4d4" stroke="#222" stroke-width=".8"><path d="M661 702V712H663V702ZM668 702 663 707 668 712ZM673 702 668 707 673 712Z"/><path d="M684 702 679 707 684 712ZM690 702 685 707 690 712Z"/><path d="M710 701 700 707 710 713Z" fill="#e8e8e8"/><path d="M719 701 729 707 719 713Z" fill="#e8e8e8"/><path d="M739 702 744 707 739 712ZM745 702 750 707 745 712Z"/><path d="M758 702 763 707 758 712ZM764 702 769 707 764 712ZM769 702V712H771V702Z"/></g>
<use href="#ud" x="888" y="707"/>
<circle cx="922" cy="707" r="4.500" fill="#e04418" stroke="#552" stroke-width=".6"/>
<path d="M948 701 953 707 948 713 943 707Z" fill="#f0a818" stroke="#222" stroke-width=".7"/><use href="#ud" x="962" y="707"/>
<path d="M982 700H986V710" fill="none" stroke="#d8c068" stroke-width="1.500"/><circle cx="982" cy="711" r="2.500" fill="none" stroke="#d8c068" stroke-width="1.500"/><path d="M986 710 991 704" stroke="#ccc" stroke-width="1.500"/>
<!-- taskbar icons -->
<path d="M16 743 23 742V748H16ZM24 742 32 741V748H24ZM16 749H23V755L16 754ZM24 749H32V756L24 755Z" fill="#fff"/>
<circle cx="74" cy="745" r="5.500" fill="none" stroke="#eee" stroke-width="1.400"/><path d="M70 750 64 756" stroke="#eee" stroke-width="1.600"/>
<path d="M113 751C110 743 118 738 126 741 133 744 131 750 128 748 125 747 124 750 126 753 127 757 116 759 113 751Z" fill="#b8cce0" stroke="#777" stroke-width=".5"/><circle cx="118" cy="745" r="1.700" fill="#d84030"/><circle cx="116" cy="750" r="1.700" fill="#30a050"/><circle cx="123" cy="744" r="1.700" fill="#e8c030"/><path d="M122 760 132 742 135 738 134 744 125 760Z" fill="#d09038"/>
<rect x="162" y="740" width="21" height="18" fill="#3ba0e8"/><rect x="164" y="743" width="7" height="8" fill="#eef6fc"/><path d="M173 744H181M173 748H181M164 754H181" stroke="#eef6fc" stroke-width="1.300"/>
<rect x="213" y="736" width="17" height="25" fill="#fff"/><rect x="215" y="740" width="13" height="4" fill="#111"/><path d="M215.500 748h2v2h-2zM220.500 748h2v2h-2zM225.500 748h2v2h-2zM215.500 752h2v2h-2zM220.500 752h2v2h-2zM225.500 752h2v2h-2zM215.500 756h2v2h-2zM220.500 756h2v2h-2zM225.500 756h2v2h-2z" fill="#111"/>
<path d="M260 740H268L270 743H281V757H260Z" fill="#f4cf62"/><rect x="260" y="743" width="21" height="14" fill="#f8dc80"/><path d="M266 757V750H275V757" fill="#2e90d8"/><rect x="268" y="748" width="5" height="3" fill="#2e90d8"/>
<circle cx="319.500" cy="748.500" r="11" fill="#e03c2c"/><path d="M319.500 748.500 309.500 742.500A11 11 0 0 0 319.500 759.500Z" fill="#3aa048"/><path d="M319.500 748.500V759.500A11 11 0 0 0 330 745Z" fill="#f6c81c"/><circle cx="319.500" cy="748.500" r="4.800" fill="#fff"/><circle cx="319.500" cy="748.500" r="3.700" fill="#4a84e8"/>
<use href="#blend" x="370" y="749" transform="translate(370 749) scale(1.250) translate(-370 -749)"/>
<!-- tray -->
<path d="M1117 751 1123 745 1129 751" fill="none" stroke="#f0f0f0" stroke-width="1.200"/>
<path d="M1141 743V746M1145 743V746M1140 746H1146V749L1143.500 751V755" fill="none" stroke="#eee"/><rect x="1148.500" y="747.500" width="7" height="8" fill="none" stroke="#eee"/><rect x="1149" y="748" width="4" height="7" fill="#eee"/>
<path d="M1167 755C1168 750 1172 746 1177 745M1170 755C1171 752 1173 750 1177 749M1173 755C1174 754 1175 753 1177 752" fill="none" stroke="#888" stroke-width="1.100"/><circle cx="1177" cy="754" r="1.400" fill="#eee"/>
<path d="M1188 747.500H1191L1195 744V755L1191 751.500H1188Z" fill="none" stroke="#eee"/><path d="M1198 746C1200 748 1200 751 1198 753" fill="none" stroke="#eee"/><path d="M1201 744C1204 748 1204 751 1201 755" fill="none" stroke="#777"/>
<path d="M1326 741H1341V752H1330L1326 754Z" fill="#fff"/><path d="M1328 744.500H1339M1328 747.500H1339M1328 750H1335" stroke="#333"/><circle cx="1343" cy="755" r="8" fill="#3c3c3c" stroke="#666"/><text x="1343" y="759.500" text-anchor="middle" font-family="Liberation Sans" font-size="12" font-weight="700" fill="#eee">1</text>
<rect x="1362" y="728" width="1" height="40" fill="#444"/>
</svg>
</body></html>
